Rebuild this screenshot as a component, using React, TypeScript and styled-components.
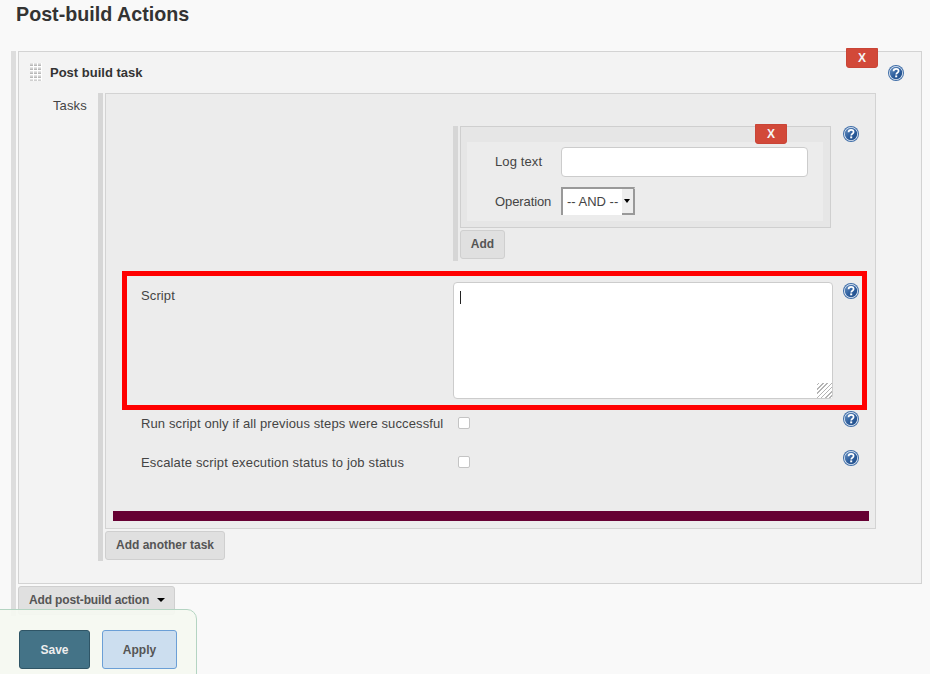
import React from "react";
import styled, { createGlobalStyle } from "styled-components";

const Global = createGlobalStyle`
  html, body { margin: 0; padding: 0; height: 100%; overflow: hidden; background: #f9f9f9; }
  body { font-family: "Liberation Sans", Arial, sans-serif; font-size: 13px; color: #333; }
  * { box-sizing: border-box; }
`;

const Page = styled.div`
  width: 930px;
  height: 674px;
  overflow: hidden;
`;
const Heading = styled.h1`
  margin: 0 0 23px 16px;
  height: 28px;
  font-size: 19.7px;
  line-height: 28px;
  font-weight: bold;
  color: #333;
`;
const Group = styled.div<{ $tone: string }>`
  border-left: 5px solid ${(p) => p.$tone};
  padding-left: 2px;
`;
const OuterGroup = styled(Group)`
  margin-left: 11px;
  width: 911px;
  padding-bottom: 1px;
`;
const Panel = styled.section`
  position: relative;
  height: 533px;
  border: 1px solid #d3d3d3;
  background: #f3f3f3;
`;
const PanelHeader = styled.div`
  display: flex;
  align-items: center;
  gap: 8px;
  height: 18px;
  margin: 11px 0 12px 11px;
`;
const PanelTitle = styled.span`
  font-weight: bold;
  font-size: 13px;
  color: #333;
`;
const TasksRow = styled.div`
  display: flex;
  align-items: flex-start;
`;
const TasksLabel = styled.div`
  width: 79px;
  padding: 5px 0 0 34px;
  font-size: 13px;
  line-height: 15px;
  letter-spacing: 0.115px;
  color: #444;
`;
const TaskGroup = styled(Group)`
  width: 778px;
  padding-bottom: 1px;
`;
const TaskPanel = styled.div`
  height: 436px;
  border: 1px solid #d3d3d3;
  background: #ececec;
  padding: 27px 6px 7px 7px;
`;
const FormRow = styled.div<{ $highlight?: boolean }>`
  display: grid;
  grid-template-columns: 312px 380px 29px;
  padding-left: 14px;
  margin: 0 ${(p) => (p.$highlight ? 2 : 7)}px 0 ${(p) => (p.$highlight ? 9 : 14)}px;
  ${(p) => p.$highlight && "border: 5px solid #f00; padding-top: 6px; padding-bottom: 6px; margin-top: 10px;"}
`;
const CheckRow = styled(FormRow)`
  height: 39px;
  align-items: start;
`;
const HelpCell = styled.div<{ $top?: number }>`
  padding: ${(p) => p.$top ?? 0}px 0 0 10px;
  line-height: 0;
`;
const FieldLabel = styled.div<{ $top?: number; $bottom?: number; $track?: number }>`
  font-size: 13px;
  line-height: 15px;
  letter-spacing: ${(p) => p.$track ?? 0.115}px;
  color: #444;
  padding-top: ${(p) => p.$top ?? 0}px;
  padding-bottom: ${(p) => p.$bottom ?? 0}px;
`;
const RepeatGroup = styled(Group)`
  height: 135px;
  margin-top: 5px;
`;
const RepeatBlock = styled.div`
  position: relative;
  width: 371px;
  height: 102px;
  border: 1px solid #cfcfcf;
  background: #e6e6e6;
  padding: 15px 7px 6px 6px;
`;
const RepeatInner = styled.div`
  display: grid;
  grid-template-columns: 66px 247px;
  grid-template-rows: 30px 28px;
  align-content: start;
  row-gap: 10px;
  align-items: center;
  height: 79px;
  padding: 5px 0 0 28px;
  background: #ececec;
`;
const TextInput = styled.input`
  display: block;
  width: 247px;
  height: 30px;
  border: 1px solid #ccc;
  border-radius: 4px;
  background: #fff;
  outline: none;
`;
const SelectBox = styled.div`
  position: relative;
  width: 74px;
  height: 28px;
`;
const NativeSelect = styled.select`
  appearance: none;
  display: block;
  width: 74px;
  height: 28px;
  padding: 0 0 2px 4px;
  border-style: solid;
  border-width: 2px 1px 0 2px;
  border-color: #999 #ddd #fff #999;
  border-radius: 0;
  background: #fff;
  font-family: "Liberation Sans", Arial, sans-serif;
  font-size: 13px;
  color: #444;
  outline: none;
`;
const SelectArrow = styled.span`
  position: absolute;
  right: 0;
  top: 2px;
  width: 13px;
  height: 26px;
  background: #eee;
  border-right: 2px solid #999;
  border-bottom: 2px solid #999;
  &::after {
    content: "";
    position: absolute;
    left: 2px;
    top: 10px;
    border-left: 3px solid transparent;
    border-right: 3px solid transparent;
    border-top: 4px solid #000;
  }
`;
const DeleteButton = styled.button<{ $top: number; $right: number }>`
  position: absolute;
  top: ${(p) => p.$top}px;
  right: ${(p) => p.$right}px;
  width: 32px;
  height: 20px;
  padding: 0;
  border: 1px solid #c94537;
  border-radius: 0 0 3px 3px;
  background: #d24939;
  color: #f5f5f5;
  font: bold 12px "Liberation Sans", Arial, sans-serif;
`;
const GreyButton = styled.button<{ $w: number }>`
  display: block;
  width: ${(p) => p.$w}px;
  height: 29px;
  padding: 0 0 1px;
  border: 1px solid #cfcfcf;
  border-radius: 3px;
  background: #e0e0e0;
  color: #555;
  font: bold 12px "Liberation Sans", Arial, sans-serif;
`;
const AddActionButton = styled(GreyButton)`
  margin-top: 2px;
  display: flex;
  align-items: center;
  padding-left: 10px;
  letter-spacing: -0.15px;
  gap: 8px;
  &::after {
    content: "";
    border-left: 4px solid transparent;
    border-right: 4px solid transparent;
    border-top: 4px solid #000;
  }
`;
const AddButton = styled(GreyButton)`
  margin-top: 2px;
`;
const AreaWrap = styled.div`
  position: relative;
  line-height: 0;
`;
const ScriptArea = styled.textarea`
  display: block;
  width: 380px;
  height: 117px;
  border: 1px solid #ccc;
  border-radius: 4px;
  background: #fff;
  outline: none;
  resize: both;
  &::-webkit-resizer {
    background: repeating-linear-gradient(135deg, #fff 0 1px, #b4b4b4 1px 2px, #fff 2px 3px);
    clip-path: polygon(100% 27%, 100% 100%, 27% 100%);
  }
`;
const Caret = styled.span`
  position: absolute;
  left: 7px;
  top: 9px;
  width: 1px;
  height: 13px;
  background: #222;
`;
const Check = styled.input`
  appearance: none;
  display: block;
  width: 12px;
  height: 12px;
  margin: 7px 0 0 5px;
  border: 1px solid #c4c4c4;
  border-radius: 2px;
  background: #fff;
`;
const PurpleBar = styled.div`
  height: 10px;
  margin-top: 23px;
  background: #660033;
`;
const Footer = styled.div`
  position: fixed;
  left: -1px;
  bottom: -1px;
  width: 198px;
  height: 66px;
  display: flex;
  gap: 12px;
  padding: 20px 0 0 19px;
  border: 1px solid #b4d4c2;
  border-radius: 0 10px 0 0;
  background: rgba(245, 249, 241, 0.93);
`;
const SaveButton = styled.button`
  width: 71px;
  height: 39px;
  padding: 0;
  border: 1px solid #2f5566;
  border-radius: 3px;
  background: #447387;
  color: #eee;
  font: bold 12px "Liberation Sans", Arial, sans-serif;
`;
const ApplyButton = styled.button`
  width: 75px;
  height: 39px;
  padding: 0;
  border: 1px solid #6b9fd6;
  border-radius: 3px;
  background: #ccdeef;
  color: #555;
  font: bold 12px "Liberation Sans", Arial, sans-serif;
`;
const HelpAnchor = styled.div`
  position: absolute;
  top: 13px;
  right: 17px;
  line-height: 0;
`;

const Help = () => (
  <svg width="16" height="16" viewBox="0 0 16 16" aria-hidden="true">
    <defs>
      <linearGradient id="hg" x1="0" y1="0" x2="1" y2="1">
        <stop offset="0" stopColor="#6f96c4" />
        <stop offset="0.5" stopColor="#2f609f" />
        <stop offset="1" stopColor="#1d4a86" />
      </linearGradient>
    </defs>
    <circle cx="8" cy="8" r="8" fill="#3f6ea8" />
    <circle cx="8" cy="8" r="7" fill="#e8eef6" />
    <circle cx="8" cy="8" r="6.2" fill="url(#hg)" />
    <path d="M5.5 6.2C5.6 4.6 6.8 3.8 8.1 3.8c1.5 0 2.5.9 2.5 2.1 0 1.8-2.4 1.8-2.4 3.6" fill="none" stroke="#fff" strokeWidth="1.7" />
    <rect x="7.2" y="10.4" width="2" height="1.9" fill="#fff" />
  </svg>
);

const Grip = () => (
  <svg width="12" height="18" aria-hidden="true">
    <defs>
      <pattern id="gp" width="4" height="4" patternUnits="userSpaceOnUse">
        <rect width="4" height="4" fill="#fefefe" />
        <rect width="3" height="1" fill="#e2e2e2" />
        <rect y="1" width="3" height="1" fill="#d0d0d0" />
        <rect y="2" width="3" height="1" fill="#b8b8b8" />
      </pattern>
    </defs>
    <rect width="12" height="18" fill="url(#gp)" />
  </svg>
);

export default function App() {
  return (
    <Page>
      <Global />
      <Heading>Post-build Actions</Heading>
      <OuterGroup $tone="#ddd">
        <Panel>
          <DeleteButton type="button" $top={-4} $right={43}>X</DeleteButton>
          <HelpAnchor><Help /></HelpAnchor>
          <PanelHeader>
            <Grip />
            <PanelTitle>Post build task</PanelTitle>
          </PanelHeader>
          <TasksRow>
            <TasksLabel>Tasks</TasksLabel>
            <TaskGroup $tone="#d6d6d6">
              <TaskPanel>
                <FormRow>
                  <div />
                  <RepeatGroup $tone="#d6d6d6">
                    <RepeatBlock>
                      <DeleteButton type="button" $top={-3} $right={43}>X</DeleteButton>
                      <RepeatInner>
                        <FieldLabel $bottom={2}>Log text</FieldLabel>
                        <TextInput />
                        <FieldLabel $track={-0.1}>Operation</FieldLabel>
                        <SelectBox>
                          <NativeSelect defaultValue="and">
                            <option value="and">-- AND --</option>
                          </NativeSelect>
                          <SelectArrow />
                        </SelectBox>
                      </RepeatInner>
                    </RepeatBlock>
                    <AddButton type="button" $w={45}>Add</AddButton>
                  </RepeatGroup>
                  <HelpCell $top={5}><Help /></HelpCell>
                </FormRow>
                <FormRow $highlight>
                  <FieldLabel $top={6}>Script</FieldLabel>
                  <AreaWrap>
                    <ScriptArea />
                    <Caret />
                  </AreaWrap>
                  <HelpCell $top={1}><Help /></HelpCell>
                </FormRow>
                <CheckRow>
                  <FieldLabel $top={6}>Run script only if all previous steps were successful</FieldLabel>
                  <Check type="checkbox" />
                  <HelpCell $top={1}><Help /></HelpCell>
                </CheckRow>
                <CheckRow>
                  <FieldLabel $top={6} $track={0.16}>Escalate script execution status to job status</FieldLabel>
                  <Check type="checkbox" />
                  <HelpCell $top={1}><Help /></HelpCell>
                </CheckRow>
                <PurpleBar />
              </TaskPanel>
              <AddButton type="button" $w={120}>Add another task</AddButton>
            </TaskGroup>
          </TasksRow>
        </Panel>
        <AddActionButton type="button" $w={157}>Add post-build action</AddActionButton>
      </OuterGroup>
      <Footer>
        <SaveButton type="button">Save</SaveButton>
        <ApplyButton type="button">Apply</ApplyButton>
      </Footer>
    </Page>
  );
}
